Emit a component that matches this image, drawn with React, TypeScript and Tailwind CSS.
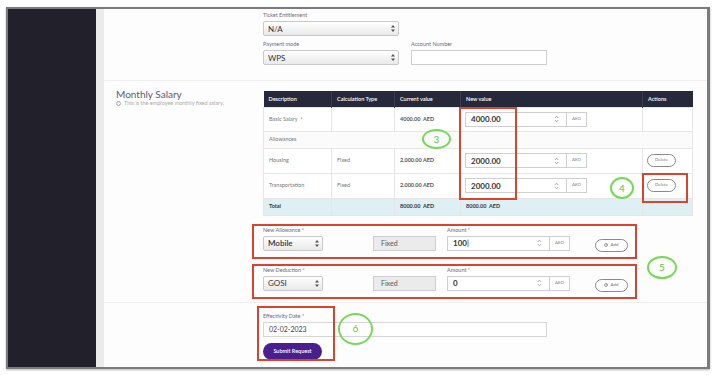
import React from "react";

/* small drawings */

function UpDown() {
  return (
    <svg width="4" height="7" viewBox="0 0 4 7" className="shrink-0">
      <path d="M2 0 L4 2.6 L0 2.6 Z" fill="#555" />
      <path d="M2 7 L4 4.4 L0 4.4 Z" fill="#555" />
    </svg>
  );
}

function Spinner() {
  return (
    <svg width="5" height="8" viewBox="0 0 5 8" className="shrink-0">
      <path d="M0.8 3 L2.5 1.2 L4.2 3" fill="none" stroke="#999" strokeWidth="0.8" />
      <path d="M0.8 5 L2.5 6.8 L4.2 5" fill="none" stroke="#999" strokeWidth="0.8" />
    </svg>
  );
}

function Select({ value, w, bold }: { value: string; w: string; bold?: boolean }) {
  return (
    <div
      className={`flex h-[15px] ${w} items-center justify-between rounded-[2px] border border-[#c9c9c9] bg-gradient-to-b from-white to-[#e9e9e9] pl-[4px] pr-[3px] text-[8px] text-[#333] ${bold ? "font-semibold" : "font-normal"}`}
    >
      <span>{value}</span>
      <UpDown />
    </div>
  );
}

function Label({ children, req }: { children: React.ReactNode; req?: boolean }) {
  return (
    <div className="h-[8px] text-[5.5px] leading-[8px] text-[#6d6a80]">
      {children}
      {req && <span className="text-[#d04848]"> *</span>}
    </div>
  );
}

function NumberInput({ value, w, caret }: { value: string; w: string; caret?: boolean }) {
  return (
    <div className="flex h-[15px]">
      <div
        className={`flex ${w} items-center justify-between border border-[#cfcfcf] bg-white pl-[5px] pr-[7px] text-[8px] font-bold text-[#333]`}
      >
        <span>
          {value}
          {caret && <span className="font-normal text-[#222]">|</span>}
        </span>
        <Spinner />
      </div>
      <div className="flex w-[20px] items-center justify-center border border-l-0 border-[#cfcfcf] bg-white text-[4.5px] text-[#888]">
        AED
      </div>
    </div>
  );
}

function Pill({ children, w }: { children: React.ReactNode; w: string }) {
  return (
    <div
      className={`flex h-[13px] ${w} items-center justify-center gap-[2px] rounded-full border border-[#8a8a8a] bg-white text-[4.5px] text-[#777]`}
    >
      {children}
    </div>
  );
}

function Mark({ n, cls }: { n: string; cls: string }) {
  return (
    <div
      className={`pointer-events-none absolute flex items-center justify-center rounded-[50%] border-2 border-[#74d954] text-[10px] text-[#62c443] ${cls}`}
    >
      {n}
    </div>
  );
}

const th = "border-r border-[#3a3d52] px-[5px] text-left text-[5.5px] font-semibold text-white";
const cell = "border border-[#e6e6e6] px-[5px] text-[5.5px]";
const td = `${cell} text-[#777]`;
const tdBold = `${cell} font-bold text-[#555]`;
const tdTotal = `${cell} font-bold text-[#333]`;

export default function App() {
  return (
    <div className="h-[375px] w-[714px] overflow-hidden bg-white pl-[6px] pt-[7px] font-[Lato,'Open_Sans',sans-serif]">
      <div className="flex h-[362px] w-[704px] border-2 border-r-[3px] border-[#7b7b7b] shadow-[0_1px_2px_rgba(0,0,0,0.3)]">
        {/* sidebar */}
        <div className="w-[88px] shrink-0 bg-[#22212b]" />
        <div className="w-[8px] shrink-0 bg-[#ebebeb]" />

        {/* main */}
        <div className="flex-1 bg-[#fdfdfd]">
          {/* bank section */}
          <div className="border-b border-[#efefef] pb-[15px] pl-[159px] pt-[2px]">
            <div className="w-[136px]">
              <Label>Ticket Entitlement</Label>
              <div className="mt-[2px]">
                <Select value="N/A" w="w-[136px]" />
              </div>
            </div>
            <div className="mt-[4px] flex gap-[12px]">
              <div className="w-[136px]">
                <Label>Payment mode</Label>
                <div className="mt-[2px]">
                  <Select value="WPS" w="w-[136px]" />
                </div>
              </div>
              <div className="w-[136px]">
                <Label>Account Number</Label>
                <div className="mt-[2px] h-[15px] w-[136px] border border-[#cfcfcf] bg-white" />
              </div>
            </div>
          </div>

          {/* monthly salary */}
          <div className="flex border-b border-[#efefef] pb-[3px] pt-[7px]">
            <div className="w-[159px] shrink-0 pl-[12px]">
              <div className="text-[10px] leading-[12px] text-[#5b5a70]">Monthly Salary</div>
              <div className="flex items-center gap-[3px] text-[5.5px] leading-[7px] text-[#aaa]">
                <span className="flex h-[5px] w-[5px] items-center justify-center rounded-full border-[0.7px] border-[#aaa] text-[3.5px] leading-none">
                  i
                </span>
                This is the employee monthly fixed salary.
              </div>
            </div>

            <div className="w-[429px]">
              <div className="relative mt-[3px]">
                <table className="w-[429px] table-fixed border-collapse">
                  <colgroup>
                    <col className="w-[68px]" />
                    <col className="w-[63px]" />
                    <col className="w-[66px]" />
                    <col className="w-[182px]" />
                    <col className="w-[50px]" />
                  </colgroup>
                  <thead>
                    <tr className="h-[16px] bg-[#262939]">
                      <th className={th}>Description</th>
                      <th className={th}>Calculation Type</th>
                      <th className={th}>Current value</th>
                      <th className={th}>New value</th>
                      <th className="px-[5px] text-left text-[5.5px] font-semibold text-white">Actions</th>
                    </tr>
                  </thead>
                  <tbody className="bg-white">
                    <tr className="h-[24px]">
                      <td className={td}>
                        Basic Salary <span className="text-[#d04848]">&nbsp;*</span>
                      </td>
                      <td className={td} />
                      <td className={tdBold}>4000.00&nbsp;&nbsp;AED</td>
                      <td className="border border-[#e6e6e6] pl-[4px]">
                        <NumberInput value="4000.00" w="w-[102px]" />
                      </td>
                      <td className={td} />
                    </tr>
                    <tr className="h-[17px] bg-[#fbfbfb]">
                      <td className={td} colSpan={5}>
                        Allowances
                      </td>
                    </tr>
                    <tr className="h-[25px]">
                      <td className={td}>Housing</td>
                      <td className={td}>Fixed</td>
                      <td className={tdBold}>2,000.00 AED</td>
                      <td className="border border-[#e6e6e6] pl-[4px]">
                        <NumberInput value="2000.00" w="w-[102px]" />
                      </td>
                      <td className="border border-[#e6e6e6] pl-[4px]">
                        <Pill w="w-[29px]">Delete</Pill>
                      </td>
                    </tr>
                    <tr className="h-[25px]">
                      <td className={td}>Transportation</td>
                      <td className={td}>Fixed</td>
                      <td className={tdBold}>2,000.00 AED</td>
                      <td className="border border-[#e6e6e6] pl-[4px]">
                        <NumberInput value="2000.00" w="w-[102px]" />
                      </td>
                      <td className="border border-[#e6e6e6] pl-[4px]">
                        <Pill w="w-[29px]">Delete</Pill>
                      </td>
                    </tr>
                    <tr className="h-[17px] bg-[#dff0f4]">
                      <td className={tdTotal}>Total</td>
                      <td className={td} />
                      <td className={tdTotal}>8000.00&nbsp;&nbsp;AED</td>
                      <td className={tdTotal}>8000.00&nbsp;&nbsp;AED</td>
                      <td className={td} />
                    </tr>
                  </tbody>
                </table>

                {/* annotations */}
                <div className="pointer-events-none absolute left-[196px] top-[16px] h-[93px] w-[58px] border-2 border-[#d8452f]" />
                <div className="pointer-events-none absolute left-[379px] top-[82px] h-[30px] w-[46px] border-2 border-[#d8452f]" />
                <Mark n="3" cls="left-[159px] top-[38px] h-[20px] w-[29px]" />
                <Mark n="4" cls="left-[347px] top-[86px] h-[22px] w-[24px]" />
              </div>

              {/* new allowance / deduction */}
              <div className="relative -ml-[11px] mt-[8px] flex flex-col gap-[5px]">
                {[
                  { label: "New Allowance", sel: "Mobile", amt: "100", caret: true, bold: true },
                  { label: "New Deduction", sel: "GOSI", amt: "0", caret: false, bold: false },
                ].map((r) => (
                  <div key={r.label} className="flex h-[35px] w-[385px] items-start border-2 border-[#d8452f] pl-[9px]">
                    <div className="w-[60px]">
                      <Label req>{r.label}</Label>
                      <div className="mt-[2px]">
                        <Select value={r.sel} w="w-[60px]" bold={r.bold} />
                      </div>
                    </div>
                    <div className="ml-[50px] mt-[10px] flex h-[15px] w-[63px] items-center border border-[#cfcfcf] bg-[#ebebeb] pl-[7px] text-[7px] text-[#555]">
                      Fixed
                    </div>
                    <div className="ml-[11px]">
                      <Label req>Amount</Label>
                      <div className="mt-[2px]">
                        <NumberInput value={r.amt} w="w-[103px]" caret={r.caret} />
                      </div>
                    </div>
                    <div className="ml-[25px] mt-[13px]">
                      <Pill w="w-[33px]">
                        <span className="flex h-[4px] w-[4px] items-center justify-center rounded-full border-[0.6px] border-[#999] text-[3.5px] leading-none">
                          +
                        </span>
                        Add
                      </Pill>
                    </div>
                  </div>
                ))}
                <Mark n="5" cls="left-[395px] top-[32px] h-[23px] w-[30px]" />
              </div>
            </div>
          </div>

          {/* effectivity date */}
          <div className="relative pl-[159px] pt-[9px]">
            <Label req>Effectivity Date</Label>
            <div className="mt-[2px] flex h-[15px] w-[284px] items-center border border-[#d6d6d6] bg-white pl-[5px] text-[7px] text-[#444]">
              02-02-2023
            </div>
            <div className="mt-[6px] flex h-[17px] w-[59px] items-center justify-center rounded-full bg-[#4a1f8d] text-[5.5px] font-semibold text-white">
              Submit Request
            </div>
            <div className="pointer-events-none absolute left-[153px] top-[3px] h-[55px] w-[78px] border-2 border-[#d8452f]" />
            <Mark n="6" cls="left-[234px] top-[10px] h-[32px] w-[35px]" />
          </div>
        </div>
      </div>
    </div>
  );
}
